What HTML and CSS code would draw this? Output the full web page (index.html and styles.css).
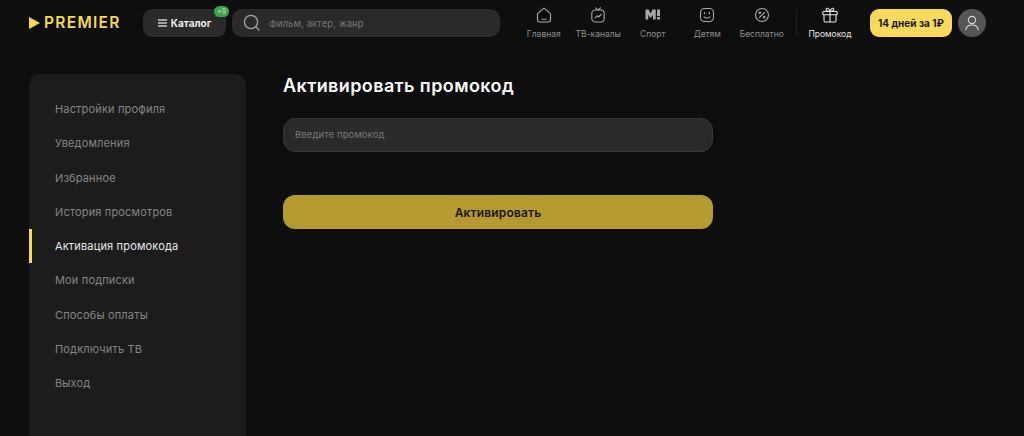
FILE: index.html
```html
<!DOCTYPE html>
<html lang="ru">
<head>
<meta charset="utf-8">
<title>PREMIER</title>
<link rel="stylesheet" href="styles.css">
</head>
<body>
<header class="header">
  <a class="logo"><svg class="logo-mark" width="11" height="12" viewBox="0 0 11 12"><path d="M0 0L11 6L0 12Z" fill="#f4d858"/></svg><span>PREMIER</span></a>
  <button class="catalog">
    <svg width="9" height="8" viewBox="0 0 9 8"><path d="M0 1H9M0 4H9M0 7H9" stroke="#c8c8c8" stroke-width="1.3"/></svg>
    <span>Каталог</span>
    <span class="badge">+9</span>
  </button>
  <div class="search">
    <svg width="18" height="18" viewBox="0 0 18 18" fill="none" stroke="#a3a3a3" stroke-width="1.3"><circle cx="8" cy="8" r="6.6"/><path d="M13 13L16 16" stroke-linecap="round"/></svg>
    <span>Фильм, актер, жанр</span>
  </div>
  <nav class="nav">
    <a class="nav-item"><svg width="16" height="16" viewBox="0 0 16 16" fill="none" stroke="#a8a8a8" stroke-width="1.1"><path d="M1.5 6.6L8 1.2L14.5 6.6V12.5A2.5 2.5 0 0 1 12 15H4A2.5 2.5 0 0 1 1.500 12.500Z" stroke-linejoin="round"/><path d="M6 12.300H10" stroke-linecap="round"/></svg><span>Главная</span></a>
    <a class="nav-item"><svg width="16" height="16" viewBox="0 0 16 16" fill="none" stroke="#a8a8a8" stroke-width="1.1"><rect x="1.800" y="3" width="12.400" height="12" rx="3.500"/><path d="M5.500 .8L8 3L10.500 .8" stroke-linecap="round"/><path d="M5 11L7 8.800L8.500 10L11 7.500" stroke-linecap="round" stroke-linejoin="round"/></svg><span>ТВ-каналы</span></a>
    <a class="nav-item"><svg width="16" height="16" viewBox="0 0 16 16" fill="#a8a8a8"><path d="M.5 2.500H3.500L5.600 6.500L7.700 2.500H10.700V12.500H8V7.500L6.300 10.500H4.900L3.200 7.500V12.500H.5Z"/><rect x="12" y="2.500" width="3" height="6.500"/><rect x="12" y="10" width="3" height="2.500"/></svg><span>Спорт</span></a>
    <a class="nav-item"><svg width="16" height="16" viewBox="0 0 16 16" fill="none" stroke="#a8a8a8" stroke-width="1.100"><rect x="1.500" y="1.500" width="13" height="13" rx="4"/><path d="M5 9.800C6.500 11.300 9.500 11.300 11 9.800" stroke-linecap="round"/><path d="M5.500 5.300V6.800M10.500 5.300V6.800" stroke-linecap="round"/></svg><span>Детям</span></a>
    <a class="nav-item"><svg width="16" height="16" viewBox="0 0 16 16" fill="none" stroke="#a8a8a8" stroke-width="1.100"><circle cx="8" cy="8" r="6.500"/><path d="M5.500 10.500L10.500 5.500" stroke-linecap="round"/><circle cx="5.800" cy="5.800" r=".8"/><circle cx="10.200" cy="10.200" r=".8"/></svg><span>Бесплатно</span></a>
    <span class="nav-sep"></span>
    <a class="nav-item nav-promo"><svg width="16" height="16" viewBox="0 0 16 16" fill="none" stroke="#e8e8e8" stroke-width="1.100"><rect x=".8" y="4.500" width="14.400" height="3.300" rx="1"/><path d="M2 7.800V13.500A1.500 1.500 0 0 0 3.500 15H12.500A1.500 1.500 0 0 0 14 13.500V7.800M8 4.500V15"/><path d="M8 4.500C6 4.500 4.200 3.800 4.200 2.300C4.200 .6 7 .5 8 4.500C9 .5 11.800 .6 11.800 2.300C11.800 3.800 10 4.500 8 4.500Z" stroke-linejoin="round"/></svg><span>Промокод</span></a>
  </nav>
  <button class="trial">14 дней за 1₽</button>
  <div class="avatar"><svg width="16" height="16" viewBox="0 0 16 16" fill="none" stroke="#d6d6d6" stroke-width="1.100"><circle cx="8" cy="5" r="3.600"/><path d="M1.800 15C2.200 11.500 4.500 10 8 10S13.800 11.500 14.200 15" stroke-linecap="round"/></svg></div>
</header>
<div class="page">
  <aside class="sidebar">
    <a class="side-item">Настройки профиля</a>
    <a class="side-item">Уведомления</a>
    <a class="side-item">Избранное</a>
    <a class="side-item">История просмотров</a>
    <a class="side-item active">Активация промокода</a>
    <a class="side-item">Мои подписки</a>
    <a class="side-item">Способы оплаты</a>
    <a class="side-item">Подключить ТВ</a>
    <a class="side-item">Выход</a>
  </aside>
  <main class="content">
    <h1 class="title">Активировать промокод</h1>
    <div class="field">Введите промокод</div>
    <button class="submit">Активировать</button>
  </main>
</div>
</body>
</html>
```
FILE: styles.css
```css
* { box-sizing: border-box; }
html, body { margin: 0; height: 100%; }
body {
  display: flex;
  flex-direction: column;
  background: #0e0e0f;
  color: #fff;
  font-family: Inter, Roboto, sans-serif;
  overflow: hidden;
}
button { font-family: inherit; border: 0; padding: 0; }

.header {
  flex: none;
  display: flex;
  align-items: flex-start;
  height: 47px;
  padding: 9px 0 0 29px;
}
.logo {
  display: flex;
  align-items: center;
  gap: 4px;
  width: 114px;
  height: 28px;
  color: #f4d858;
  font-size: 15.500px;
  font-weight: 600;
  line-height: 28px;
  letter-spacing: 1.300px;
}
.catalog {
  position: relative;
  display: flex;
  align-items: center;
  justify-content: center;
  gap: 4px;
  width: 83px;
  height: 28px;
  border-radius: 9px;
  background: #2a2a2b;
  color: #ececec;
  font-size: 10px;
  font-weight: 700;
}
.badge {
  position: absolute;
  top: -3px;
  right: -3px;
  width: 15px;
  height: 11px;
  border-radius: 6px;
  background: #3fa24b;
  color: #b6dcb9;
  font-size: 7px;
  line-height: 11px;
  font-weight: 500;
  text-align: center;
}
.search {
  display: flex;
  align-items: center;
  gap: 8px;
  width: 268px;
  height: 28px;
  margin-left: 6px;
  padding-left: 11px;
  border-radius: 10px;
  background: #2a2a2b;
  color: #77777a;
  font-size: 9.500px;
  letter-spacing: .1px;
}
.nav {
  display: flex;
  align-items: flex-start;
  margin-left: 16.500px;
  margin-top: -2px;
}
.nav-item {
  display: flex;
  flex-direction: column;
  align-items: center;
  gap: 5px;
  width: 54.500px;
  color: #8e8e8e;
  font-size: 8.500px;
  line-height: 12px;
  white-space: nowrap;
}
.nav-sep {
  width: 1px;
  height: 26px;
  margin: 3px 0 0 7px;
  background: #232324;
}
.nav-promo { margin-left: 6px; width: 54px; color: #e6e6e6; }
.trial {
  width: 82px;
  height: 28px;
  margin-left: 13px;
  border-radius: 9px;
  background: #f8d95c;
  color: #1c1a10;
  font-size: 10px;
  font-weight: 700;
}
.avatar {
  display: flex;
  align-items: center;
  justify-content: center;
  width: 28px;
  height: 28px;
  margin-left: 6px;
  border-radius: 50%;
  background: #555556;
}

.page {
  flex: 1;
  min-height: 0;
  display: flex;
  align-items: stretch;
  gap: 37px;
  padding: 27px 0 0 29px;
}
.sidebar {
  display: flex;
  flex-direction: column;
  width: 217px;
  padding-top: 18px;
  border-radius: 10px 10px 0 0;
  background: #1c1c1d;
}
.side-item {
  height: 34.300px;
  padding-left: 26px;
  color: #858586;
  font-size: 11px;
  line-height: 34.300px;
  letter-spacing: .16px;
}
.side-item.active {
  padding-left: 23px;
  border-left: 3px solid #f8d95c;
  color: #e8e8e8;
}
.content { display: flex; flex-direction: column; width: 430px; }
.title {
  margin: 0;
  font-size: 18px;
  font-weight: 600;
  line-height: 24px;
  letter-spacing: .4px;
}
.field {
  height: 34px;
  margin-top: 20px;
  padding-left: 11px;
  border: 1px solid #363637;
  border-radius: 12px;
  background: #2a2a2b;
  color: #77777a;
  font-size: 9.500px;
  line-height: 32px;
  letter-spacing: .1px;
}
.submit {
  height: 34px;
  margin-top: 43px;
  border-radius: 12px;
  background: #b59a31;
  color: #191608;
  font-size: 12px;
  font-weight: 600;
  letter-spacing: .15px;
}
```
